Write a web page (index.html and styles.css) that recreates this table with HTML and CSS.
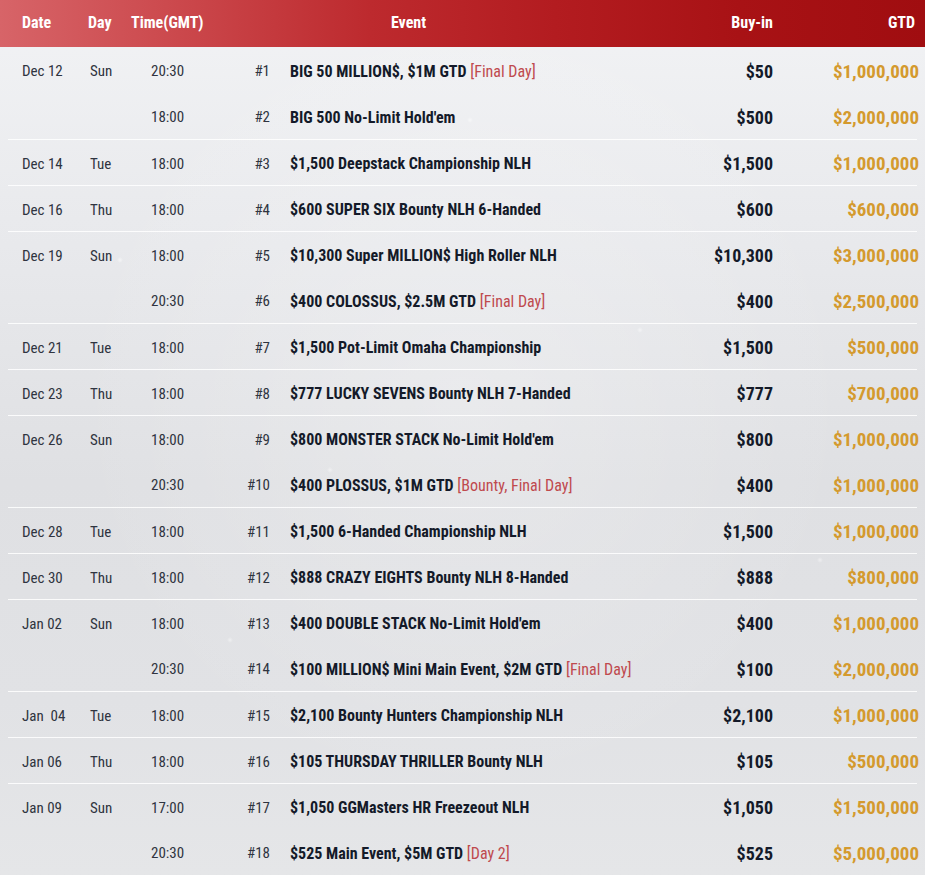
FILE: index.html
```html
<!DOCTYPE html>
<html lang="en">
<head>
<meta charset="utf-8">
<title>Schedule</title>
<link rel="stylesheet" href="styles.css">
</head>
<body>
<div class="page">
  <div class="head">
    <div class="h-date">Date</div>
    <div class="h-day">Day</div>
    <div class="h-time">Time(GMT)</div>
    <div class="h-event">Event</div>
    <div class="h-buy">Buy-in</div>
    <div class="h-gtd">GTD</div>
  </div>

  <div class="group">
    <div class="row"><span class="date">Dec 12</span><span class="day">Sun</span><span class="time">20:30</span><span class="num">#1</span><span class="event">BIG 50 MILLION$, $1M GTD <em>[Final Day]</em></span><span class="buy">$50</span><span class="gtd">$1,000,000</span></div>
    <div class="row"><span class="date"></span><span class="day"></span><span class="time">18:00</span><span class="num">#2</span><span class="event">BIG 500 No-Limit Hold'em</span><span class="buy">$500</span><span class="gtd">$2,000,000</span></div>
  </div>
  <div class="group">
    <div class="row"><span class="date">Dec 14</span><span class="day">Tue</span><span class="time">18:00</span><span class="num">#3</span><span class="event">$1,500 Deepstack Championship NLH</span><span class="buy">$1,500</span><span class="gtd">$1,000,000</span></div>
  </div>
  <div class="group">
    <div class="row"><span class="date">Dec 16</span><span class="day">Thu</span><span class="time">18:00</span><span class="num">#4</span><span class="event">$600 SUPER SIX Bounty NLH 6-Handed</span><span class="buy">$600</span><span class="gtd">$600,000</span></div>
  </div>
  <div class="group">
    <div class="row"><span class="date">Dec 19</span><span class="day">Sun</span><span class="time">18:00</span><span class="num">#5</span><span class="event">$10,300 Super MILLION$ High Roller NLH</span><span class="buy">$10,300</span><span class="gtd">$3,000,000</span></div>
    <div class="row"><span class="date"></span><span class="day"></span><span class="time">20:30</span><span class="num">#6</span><span class="event">$400 COLOSSUS, $2.5M GTD <em>[Final Day]</em></span><span class="buy">$400</span><span class="gtd">$2,500,000</span></div>
  </div>
  <div class="group">
    <div class="row"><span class="date">Dec 21</span><span class="day">Tue</span><span class="time">18:00</span><span class="num">#7</span><span class="event">$1,500 Pot-Limit Omaha Championship</span><span class="buy">$1,500</span><span class="gtd">$500,000</span></div>
  </div>
  <div class="group">
    <div class="row"><span class="date">Dec 23</span><span class="day">Thu</span><span class="time">18:00</span><span class="num">#8</span><span class="event">$777 LUCKY SEVENS Bounty NLH 7-Handed</span><span class="buy">$777</span><span class="gtd">$700,000</span></div>
  </div>
  <div class="group">
    <div class="row"><span class="date">Dec 26</span><span class="day">Sun</span><span class="time">18:00</span><span class="num">#9</span><span class="event">$800 MONSTER STACK No-Limit Hold'em</span><span class="buy">$800</span><span class="gtd">$1,000,000</span></div>
    <div class="row"><span class="date"></span><span class="day"></span><span class="time">20:30</span><span class="num">#10</span><span class="event">$400 PLOSSUS, $1M GTD <em>[Bounty, Final Day]</em></span><span class="buy">$400</span><span class="gtd">$1,000,000</span></div>
  </div>
  <div class="group">
    <div class="row"><span class="date">Dec 28</span><span class="day">Tue</span><span class="time">18:00</span><span class="num">#11</span><span class="event">$1,500 6-Handed Championship NLH</span><span class="buy">$1,500</span><span class="gtd">$1,000,000</span></div>
  </div>
  <div class="group">
    <div class="row"><span class="date">Dec 30</span><span class="day">Thu</span><span class="time">18:00</span><span class="num">#12</span><span class="event">$888 CRAZY EIGHTS Bounty NLH 8-Handed</span><span class="buy">$888</span><span class="gtd">$800,000</span></div>
  </div>
  <div class="group">
    <div class="row"><span class="date">Jan 02</span><span class="day">Sun</span><span class="time">18:00</span><span class="num">#13</span><span class="event">$400 DOUBLE STACK No-Limit Hold'em</span><span class="buy">$400</span><span class="gtd">$1,000,000</span></div>
    <div class="row"><span class="date"></span><span class="day"></span><span class="time">20:30</span><span class="num">#14</span><span class="event">$100 MILLION$ Mini Main Event, $2M GTD <em>[Final Day]</em></span><span class="buy">$100</span><span class="gtd">$2,000,000</span></div>
  </div>
  <div class="group">
    <div class="row"><span class="date">Jan&nbsp; 04</span><span class="day">Tue</span><span class="time">18:00</span><span class="num">#15</span><span class="event">$2,100 Bounty Hunters Championship NLH</span><span class="buy">$2,100</span><span class="gtd">$1,000,000</span></div>
  </div>
  <div class="group">
    <div class="row"><span class="date">Jan 06</span><span class="day">Thu</span><span class="time">18:00</span><span class="num">#16</span><span class="event">$105 THURSDAY THRILLER Bounty NLH</span><span class="buy">$105</span><span class="gtd">$500,000</span></div>
  </div>
  <div class="group">
    <div class="row"><span class="date">Jan 09</span><span class="day">Sun</span><span class="time">17:00</span><span class="num">#17</span><span class="event">$1,050 GGMasters HR Freezeout NLH</span><span class="buy">$1,050</span><span class="gtd">$1,500,000</span></div>
    <div class="row"><span class="date"></span><span class="day"></span><span class="time">20:30</span><span class="num">#18</span><span class="event">$525 Main Event, $5M GTD <em>[Day 2]</em></span><span class="buy">$525</span><span class="gtd">$5,000,000</span></div>
  </div>
</div>
</body>
</html>
```
FILE: styles.css
```css
html, body {
  margin: 0;
  padding: 0;
}
body {
  width: 925px;
  height: 875px;
  overflow: hidden;
  font-family: "Roboto Condensed", Roboto, "Liberation Sans Narrow", sans-serif;
  background:
    radial-gradient(circle at 120px 260px, rgba(255,255,255,.55) 0, rgba(255,255,255,0) 3px),
    radial-gradient(circle at 470px 120px, rgba(255,255,255,.5) 0, rgba(255,255,255,0) 3px),
    radial-gradient(circle at 640px 330px, rgba(255,255,255,.5) 0, rgba(255,255,255,0) 3px),
    radial-gradient(circle at 330px 470px, rgba(255,255,255,.45) 0, rgba(255,255,255,0) 3px),
    radial-gradient(circle at 820px 560px, rgba(255,255,255,.45) 0, rgba(255,255,255,0) 3px),
    radial-gradient(circle at 230px 640px, rgba(255,255,255,.45) 0, rgba(255,255,255,0) 3px),
    radial-gradient(ellipse at 50% 45%, rgba(255,255,255,.25) 0, rgba(255,255,255,0) 60%),
    linear-gradient(to bottom, #f2f3f5 0%, #e9eaed 25%, #dfe0e3 55%, #e1e2e5 80%, #e5e6e8 100%);
}
.page {
  display: flex;
  flex-direction: column;
}
.head {
  height: 47px;
  box-sizing: border-box;
  padding: 0 10px 3px 22px;
  display: grid;
  grid-template-columns: 66px 43px 73px 1fr 120px 142px;
  align-items: center;
  color: #fff;
  font-weight: 700;
  font-size: 16px;
  background: linear-gradient(to right, #d76468 0%, #cc4a4e 18%, #bd2a2e 40%, #b31c20 60%, #a81215 80%, #a00d10 100%);
}
.h-event {
  text-align: center;
  padding-right: 40px;
}
.h-buy {
  text-align: right;
}
.h-gtd {
  text-align: right;
}
.group {
  margin: 0 8px;
}
.group + .group {
  border-top: 1px solid rgba(255,255,255,.85);
}
.row {
  height: 46px;
  box-sizing: border-box;
  padding: 2px 0 0 14px;
  display: grid;
  grid-template-columns: 68px 61px 60px 59px 1fr 114px 144px;
  align-items: center;
}
.group + .group .row:first-child {
  height: 45px;
}
.date, .day, .time, .num {
  font-size: 15px;
  color: #2f3440;
}
.num {
  text-align: right;
}
.event {
  padding-left: 20px;
  font-size: 16px;
  font-weight: 700;
  color: #141a29;
  white-space: nowrap;
}
.event em {
  font-style: normal;
  font-weight: 400;
  color: #bf4a4e;
}
.buy {
  text-align: right;
  font-size: 18px;
  font-weight: 700;
  color: #141a29;
}
.gtd {
  text-align: right;
  font-size: 19px;
  font-weight: 700;
  color: #d49a2e;
  margin-right: -2px;
}
```
